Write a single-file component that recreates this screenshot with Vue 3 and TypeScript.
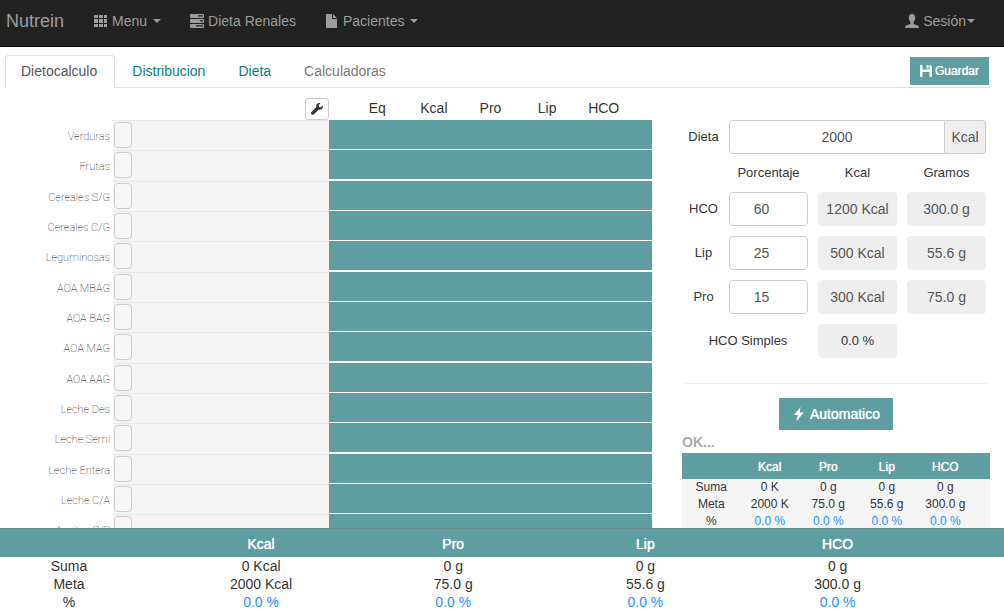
<script setup lang="ts">
import { ref } from 'vue'

interface Macro {
  id: string
  name: string
  percent: number
  kcal: string
  grams: string
}

interface SummaryRow {
  label: string
  values: string[]
  percent?: boolean
}

const tabs = ['Dietocalculo', 'Distribucion', 'Dieta', 'Calculadoras']
const activeTab = ref('Dietocalculo')
const foodHeads = ['Eq', 'Kcal', 'Pro', 'Lip', 'HCO']
const foods = [
  'Verduras', 'Frutas', 'Cereales S/G', 'Cereales C/G', 'Leguminosas',
  'AOA MBAG', 'AOA BAG', 'AOA MAG', 'AOA AAG', 'Leche Des',
  'Leche Semi', 'Leche Entera', 'Leche C/A', 'Aceites S/P',
]

const total = ref('2000')
const macros = ref<Macro[]>([
  { id: 'hco', name: 'HCO', percent: 60, kcal: '1200 Kcal', grams: '300.0 g' },
  { id: 'lip', name: 'Lip', percent: 25, kcal: '500 Kcal', grams: '55.6 g' },
  { id: 'pro', name: 'Pro', percent: 15, kcal: '300 Kcal', grams: '75.0 g' },
])

const summaryHeads = ['Kcal', 'Pro', 'Lip', 'HCO']
const shortSummary: SummaryRow[] = [
  { label: 'Suma', values: ['0 K', '0 g', '0 g', '0 g'] },
  { label: 'Meta', values: ['2000 K', '75.0 g', '55.6 g', '300.0 g'] },
  { label: '%', values: ['0.0 %', '0.0 %', '0.0 %', '0.0 %'], percent: true },
]
const fullSummary: SummaryRow[] = [
  { label: 'Suma', values: ['0 Kcal', '0 g', '0 g', '0 g'] },
  { label: 'Meta', values: ['2000 Kcal', '75.0 g', '55.6 g', '300.0 g'] },
  { label: '%', values: ['0.0 %', '0.0 %', '0.0 %', '0.0 %'], percent: true },
]
</script>

<template>
  <div class="page">
    <nav class="navbar">
      <a class="brand" href="#">Nutrein</a>
      <a class="nav-link menu" href="#">
        <svg class="icon" viewBox="0 0 14 14" aria-hidden="true">
          <path d="M0 1h4v3H0zM5 1h4v3H5zM10 1h3v3h-3zM0 5h4v4H0zM5 5h4v4H5zM10 5h3v4h-3zM0 10h4v3H0zM5 10h4v3H5zM10 10h3v3h-3z" />
        </svg>
        <span>Menu</span><i class="caret"></i>
      </a>
      <a class="nav-link renal" href="#">
        <svg class="icon" viewBox="0 0 14 14" aria-hidden="true">
          <path fill-rule="evenodd" d="M1 0h12q1 0 1 1v2q0 1-1 1H1Q0 4 0 3V1q0-1 1-1zM8 1.2v1.4h5V1.2zM1 5h12q1 0 1 1v2q0 1-1 1H1Q0 9 0 8V6q0-1 1-1zM10 6.2v1.4h3V6.2zM1 10h12q1 0 1 1v2q0 1-1 1H1q-1 0-1-1v-2q0-1 1-1zM6 11.2v1.4h7v-1.4z" />
        </svg>
        <span>Dieta Renales</span>
      </a>
      <a class="nav-link" href="#">
        <svg class="icon" viewBox="0 0 14 14" aria-hidden="true">
          <path d="M1.500 0H7v5h5v8.500q0 .5-.5.5h-10q-.5 0-.5-.5V.5q0-.5.500-.5zM8 0l4 4H8z" />
        </svg>
        <span>Pacientes</span><i class="caret"></i>
      </a>
      <a class="nav-link session" href="#">
        <svg class="icon" viewBox="0 0 14 14" aria-hidden="true">
          <path d="M7 0c2.300 0 3.300 1.700 3.200 3.800-.1 1.900-.8 3.200-1.700 4.200v1.300c0 .5.3.7.8.9l3.300 1.400c1 .4 1.400 1 1.400 2.400H0c0-1.400.4-2 1.400-2.400l3.300-1.400c.5-.2.8-.4.8-.9V8C4.600 7 3.900 5.700 3.800 3.800 3.700 1.700 4.700 0 7 0z" />
        </svg>
        <span>Sesión</span><i class="caret tight"></i>
      </a>
    </nav>

    <div class="tab-bar">
      <button
        v-for="tab in tabs"
        :key="tab"
        type="button"
        class="tab"
        :class="{ active: tab === activeTab, muted: tab === 'Calculadoras' }"
        @click="activeTab = tab"
      >{{ tab }}</button>
      <button type="button" class="solid save">
        <svg class="icon" viewBox="0 0 12 12" aria-hidden="true">
          <path d="M0 0h2.500v4.500h7V0H10.500L12 1.500V12h-2.500V7h-7v5H0zM6.500 0h2v3.500h-2z" />
        </svg>
        <span>Guardar</span>
      </button>
    </div>

    <main class="content">
      <section class="foods">
        <header class="food-row food-head">
          <div class="tool-cell">
            <button type="button" class="wrench" aria-label="Ajustes">
              <svg viewBox="0 0 12 12" aria-hidden="true">
                <path d="M11.800 2.500 10 4.200 8 3.900 7.700 2 9.400.200C7.900-.3 6.200.3 5.500 1.700c-.4.8-.4 1.600-.2 2.300L.5 8.900c-.7.7-.7 1.700 0 2.400s1.700.7 2.400 0L7.800 6.500c.8.3 1.700.2 2.500-.2 1.400-.7 2-2.300 1.500-3.800z" />
              </svg>
            </button>
          </div>
          <div class="heads"><span v-for="h in foodHeads" :key="h">{{ h }}</span></div>
        </header>
        <div v-for="food in foods" :key="food" class="food-row food">
          <span class="food-name">{{ food }}</span>
          <div class="slot"><button type="button" class="handle" :aria-label="food"></button></div>
          <div class="amounts"></div>
        </div>
      </section>

      <aside class="side">
        <form class="targets" @submit.prevent>
          <label for="total">Dieta</label>
          <div class="group">
            <input id="total" v-model="total" type="text" class="field">
            <span class="addon">Kcal</span>
          </div>
          <span class="col-head first">Porcentaje</span>
          <span class="col-head">Kcal</span>
          <span class="col-head">Gramos</span>
          <template v-for="m in macros" :key="m.id">
            <label :for="m.id">{{ m.name }}</label>
            <input :id="m.id" v-model="m.percent" type="text" class="field percent">
            <output class="result">{{ m.kcal }}</output>
            <output class="result">{{ m.grams }}</output>
          </template>
          <span class="simple-label">HCO Simples</span>
          <output class="result dark">0.0 %</output>
        </form>
        <hr>
        <button type="button" class="solid auto">
          <svg class="icon" viewBox="0 0 10 14" aria-hidden="true">
            <path d="M6.500 0 0 8h3.800L2.500 14 10 5.500H5.800z" />
          </svg>
          <span>Automatico</span>
        </button>
        <p class="status">OK...</p>
        <div class="mini">
          <table class="summary">
            <thead>
              <tr><th></th><th v-for="h in summaryHeads" :key="h">{{ h }}</th><th class="end"></th></tr>
            </thead>
            <tbody>
              <tr v-for="row in shortSummary" :key="row.label">
                <td>{{ row.label }}</td>
                <td v-for="(v, i) in row.values" :key="i" :class="{ blue: row.percent }">{{ v }}</td>
                <td></td>
              </tr>
            </tbody>
          </table>
        </div>
      </aside>
    </main>

    <footer class="totals">
      <table class="summary">
        <thead>
          <tr><th class="lead"></th><th v-for="h in summaryHeads" :key="h">{{ h }}</th><th class="end"></th></tr>
        </thead>
        <tbody>
          <tr v-for="row in fullSummary" :key="row.label">
            <td class="lead">{{ row.label }}</td>
            <td v-for="(v, i) in row.values" :key="i" :class="{ blue: row.percent }">{{ v }}</td>
            <td></td>
          </tr>
        </tbody>
      </table>
    </footer>
  </div>
</template>

<style>
body {
  margin: 0;
  background: #fff;
}
</style>

<style scoped>
.page {
  display: flex;
  flex-direction: column;
  height: 100vh;
  overflow: hidden;
  color: #333;
  font: 14px/20px "Liberation Sans", Arial, sans-serif;
}
.page * {
  box-sizing: border-box;
}
button,
input {
  font: inherit;
}
svg {
  fill: currentColor;
}
.icon {
  width: 14px;
  height: 14px;
  flex: none;
}

.navbar {
  display: flex;
  flex: none;
  align-items: center;
  height: 47px;
  padding: 0 29px 5px 6px;
  background: #222;
  border-bottom: 1px solid #080808;
}
.navbar a {
  color: #9d9d9d;
  text-decoration: none;
}
.brand {
  margin-right: 30px;
  font-size: 18px;
}
.nav-link {
  display: flex;
  align-items: center;
  gap: 4px;
  margin-right: 29px;
}
.nav-link.session {
  margin: 0 0 0 auto;
}
.caret {
  margin-left: 2px;
  border: 4px solid transparent;
  border-top-color: currentColor;
  border-bottom: 0;
}
.caret.tight {
  margin-left: -3px;
}

.tab-bar {
  display: flex;
  flex: none;
  align-items: flex-end;
  gap: 1px;
  height: 41px;
  margin: 0 14px 0 5px;
  border-bottom: 1px solid #ddd;
}
.tab {
  height: 33px;
  margin-bottom: -1px;
  padding: 0 15px 2px;
  color: #087f78;
  background: none;
  border: 1px solid transparent;
  border-radius: 4px 4px 0 0;
}
.tab.active {
  padding-right: 17px;
  color: #555;
  background: #fff;
  border-color: #ddd #ddd #fff;
}
.tab.muted {
  color: #777;
}
.solid {
  display: flex;
  align-items: center;
  justify-content: center;
  color: #fff;
  text-shadow: 0 0 1px #fff;
  background: #5f9ea0;
  border: 0;
}
.save {
  gap: 3px;
  height: 28px;
  margin: 0 1px 2px auto;
  padding: 0 10px;
  font-size: 12px;
}
.save .icon {
  width: 12px;
  height: 12px;
}

.content {
  display: grid;
  flex: 1;
  grid-template-columns: 652fr 308fr;
  gap: 30px;
  align-items: start;
  min-height: 0;
  padding: 10px 14px 0 0;
  overflow-y: auto;
  scrollbar-width: none;
}
.food-row {
  display: grid;
  grid-template-columns: 113px 216fr 323fr;
}
.food-head {
  height: 22px;
}
.tool-cell {
  display: flex;
  grid-column: 1 / 3;
  justify-content: flex-end;
}
.wrench {
  display: flex;
  align-items: center;
  justify-content: center;
  width: 24px;
  height: 22px;
  padding: 0;
  color: #333;
  background: #fff;
  border: 1px solid #ccc;
  border-radius: 3px;
}
.wrench svg {
  width: 12px;
  height: 12px;
}
.heads {
  display: grid;
  grid-template-columns: repeat(5, 1fr);
  padding: 0 20px;
  text-align: center;
}
.food {
  height: 30px;
}
.food:nth-child(3n) {
  height: 31px;
}
.food-name {
  padding: 7px 3px 0 0;
  color: #000;
  font: 100 11px/20px Roboto, "Liberation Sans", sans-serif;
  text-align: right;
}
.slot {
  padding: 1px;
  background: #f4f4f4;
  border-top: 1px solid #e8e8e8;
}
.handle {
  display: block;
  width: 18px;
  height: 26px;
  padding: 0;
  background: #f6f6f6;
  border: 1px solid #ccc;
  border-radius: 4px;
}
.amounts {
  height: 29px;
  background: #5f9ea0;
}

.side {
  display: flex;
  flex-direction: column;
}
.targets {
  display: grid;
  grid-template-columns: 31px repeat(3, 1fr);
  gap: 10px;
  align-items: center;
  margin: 22px 4px 0 6px;
  text-align: center;
}
.targets label {
  white-space: nowrap;
  justify-self: center;
}
.group {
  display: flex;
  grid-column: 2 / 5;
}
.field {
  width: 100%;
  min-width: 0;
  height: 34px;
  padding: 6px 12px;
  color: #555;
  text-align: center;
  background: #fff;
  border: 1px solid #ccc;
  border-radius: 4px;
}
.group .field {
  flex: 1;
  border-radius: 4px 0 0 4px;
}
.addon {
  width: 41px;
  padding: 6px 0;
  color: #555;
  background: #eee;
  border: 1px solid #ccc;
  border-left: 0;
  border-radius: 0 4px 4px 0;
}
.col-head {
  padding-bottom: 1px;
  font-size: 13px;
  line-height: 17px;
}
.col-head.first {
  grid-column: 2;
}
.percent {
  padding-right: 26px;
}
.result {
  height: 34px;
  color: #555;
  line-height: 34px;
  background: #eee;
  border-radius: 4px;
}
.result.dark {
  color: #333;
  font-size: 13px;
}
.targets label,
.simple-label {
  font-size: 13px;
}
.simple-label {
  grid-column: 1 / 3;
}
hr {
  width: 100%;
  margin: 25px 0 14px;
  border: 0;
  border-top: 1px solid #eee;
}
.auto {
  gap: 4px;
  align-self: center;
  height: 32px;
  padding: 0 13px;
}
.status {
  margin: 2px 0 1px;
  color: #aaa;
  font-weight: bold;
}
.summary {
  width: 100%;
  border-collapse: collapse;
  table-layout: fixed;
  text-align: center;
}
.summary th,
.summary td {
  padding: 0;
}
.summary th {
  padding-top: 2px;
  color: #fff;
  font-weight: normal;
  text-shadow: 0 0 1px #fff;
  background: #5f9ea0;
}
.summary .blue {
  color: #1e90ff;
}
.mini {
  padding-bottom: 5px;
  font-size: 12px;
  line-height: 17px;
  background: #f4f4f4;
  border-radius: 2px;
}
.mini th {
  height: 26px;
}
.mini .end {
  width: 5%;
}

.totals {
  flex: none;
  line-height: 18px;
  background: #fff;
  border-top: 1px solid #6c8c8e;
}
.totals th {
  height: 28px;
}
.totals th.lead {
  width: 165px;
}
.totals .lead {
  padding-right: 27px;
}
.totals th.end {
  width: 7%;
}
</style>
